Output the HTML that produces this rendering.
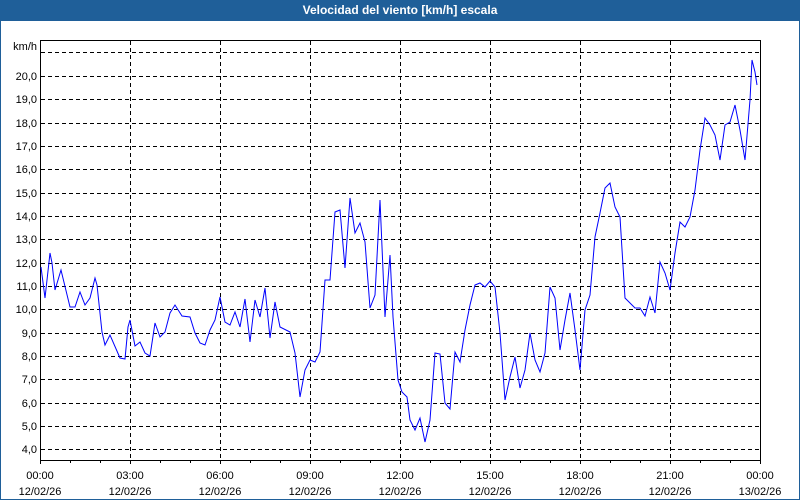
<!DOCTYPE html>
<html><head><style>
html,body{margin:0;padding:0;background:#fff;}
body{width:800px;height:500px;position:relative;overflow:hidden;font-family:"Liberation Sans",sans-serif;}
.frame{position:absolute;left:0;top:0;width:798px;height:498px;border:1px solid #1f5f99;}
.title{position:absolute;left:0;top:0;width:800px;height:21px;background:#1f5f99;color:#fff;font-weight:bold;font-size:12px;text-align:center;line-height:21px;}
</style></head><body>
<div class="frame"></div>
<div class="title">Velocidad del viento [km/h] escala</div>
<svg width="800" height="500" style="position:absolute;left:0;top:0" font-family="Liberation Sans, sans-serif" font-size="11">
<g stroke="#000" stroke-dasharray="4,3" stroke-width="1">
<line x1="41" x2="760" y1="52.5" y2="52.5"/><line x1="41" x2="760" y1="76.5" y2="76.5"/><line x1="41" x2="760" y1="99.5" y2="99.5"/><line x1="41" x2="760" y1="123.5" y2="123.5"/><line x1="41" x2="760" y1="146.5" y2="146.5"/><line x1="41" x2="760" y1="169.5" y2="169.5"/><line x1="41" x2="760" y1="193.5" y2="193.5"/><line x1="41" x2="760" y1="216.5" y2="216.5"/><line x1="41" x2="760" y1="239.5" y2="239.5"/><line x1="41" x2="760" y1="263.5" y2="263.5"/><line x1="41" x2="760" y1="286.5" y2="286.5"/><line x1="41" x2="760" y1="309.5" y2="309.5"/><line x1="41" x2="760" y1="333.5" y2="333.5"/><line x1="41" x2="760" y1="356.5" y2="356.5"/><line x1="41" x2="760" y1="379.5" y2="379.5"/><line x1="41" x2="760" y1="403.5" y2="403.5"/><line x1="41" x2="760" y1="426.5" y2="426.5"/><line x1="41" x2="760" y1="449.5" y2="449.5"/>
<line x1="130.5" x2="130.5" y1="41" y2="460"/><line x1="220.5" x2="220.5" y1="41" y2="460"/><line x1="310.5" x2="310.5" y1="41" y2="460"/><line x1="400.5" x2="400.5" y1="41" y2="460"/><line x1="490.5" x2="490.5" y1="41" y2="460"/><line x1="580.5" x2="580.5" y1="41" y2="460"/><line x1="670.5" x2="670.5" y1="41" y2="460"/>
</g>
<rect x="40.5" y="40.5" width="720" height="420" fill="none" stroke="#000"/>
<g stroke="#000"><line x1="40.5" x2="40.5" y1="460" y2="464"/><line x1="70.5" x2="70.5" y1="460" y2="463"/><line x1="100.5" x2="100.5" y1="460" y2="463"/><line x1="130.5" x2="130.5" y1="460" y2="464"/><line x1="160.5" x2="160.5" y1="460" y2="463"/><line x1="190.5" x2="190.5" y1="460" y2="463"/><line x1="220.5" x2="220.5" y1="460" y2="464"/><line x1="250.5" x2="250.5" y1="460" y2="463"/><line x1="280.5" x2="280.5" y1="460" y2="463"/><line x1="310.5" x2="310.5" y1="460" y2="464"/><line x1="340.5" x2="340.5" y1="460" y2="463"/><line x1="370.5" x2="370.5" y1="460" y2="463"/><line x1="400.5" x2="400.5" y1="460" y2="464"/><line x1="430.5" x2="430.5" y1="460" y2="463"/><line x1="460.5" x2="460.5" y1="460" y2="463"/><line x1="490.5" x2="490.5" y1="460" y2="464"/><line x1="520.5" x2="520.5" y1="460" y2="463"/><line x1="550.5" x2="550.5" y1="460" y2="463"/><line x1="580.5" x2="580.5" y1="460" y2="464"/><line x1="610.5" x2="610.5" y1="460" y2="463"/><line x1="640.5" x2="640.5" y1="460" y2="463"/><line x1="670.5" x2="670.5" y1="460" y2="464"/><line x1="700.5" x2="700.5" y1="460" y2="463"/><line x1="730.5" x2="730.5" y1="460" y2="463"/><line x1="760.5" x2="760.5" y1="460" y2="464"/></g>
<g text-anchor="end" fill="#000">
<text x="37" y="50">km/h</text>
<text x="37" y="80">20,0</text><text x="37" y="103">19,0</text><text x="37" y="127">18,0</text><text x="37" y="150">17,0</text><text x="37" y="173">16,0</text><text x="37" y="197">15,0</text><text x="37" y="220">14,0</text><text x="37" y="243">13,0</text><text x="37" y="267">12,0</text><text x="37" y="290">11,0</text><text x="37" y="313">10,0</text><text x="37" y="337">9,0</text><text x="37" y="360">8,0</text><text x="37" y="383">7,0</text><text x="37" y="407">6,0</text><text x="37" y="430">5,0</text><text x="37" y="453">4,0</text>
</g>
<g text-anchor="middle" fill="#000">
<text x="40" y="479">00:00</text><text x="40" y="495">12/02/26</text>
<text x="130" y="479">03:00</text><text x="130" y="495">12/02/26</text>
<text x="220" y="479">06:00</text><text x="220" y="495">12/02/26</text>
<text x="310" y="479">09:00</text><text x="310" y="495">12/02/26</text>
<text x="400" y="479">12:00</text><text x="400" y="495">12/02/26</text>
<text x="490" y="479">15:00</text><text x="490" y="495">12/02/26</text>
<text x="580" y="479">18:00</text><text x="580" y="495">12/02/26</text>
<text x="670" y="479">21:00</text><text x="670" y="495">12/02/26</text>
<text x="760" y="479">00:00</text><text x="760" y="495">13/02/26</text>
</g>
<polyline fill="none" stroke="#0000ff" stroke-width="1" points="41,267 45,298 50,253 52,263 55,290 61,270 70,307 75,307 80,292 85,305 90,298 95,278 97,285 102,332 105,345 110,335 120,358 125,359 128,327 130,320 135,346 140,342 145,353 150,356 155,323 160,337 165,332 170,313 175,305 182,316 190,317 195,333 200,343 205,345 210,330 215,320 220,297 225,322 230,325 235,312 240,327 245,299 250,342 255,300 260,317 265,288 270,338 275,302 280,327 290,332 295,353 300,397 305,370 310,360 315,362 320,352 325,280 330,280 335,212 340,210 345,268 350,198 355,233 360,223 365,242 370,308 375,295 380,200 385,317 390,255 393,317 398,380 402,392 407,397 410,420 415,430 420,418 425,442 430,420 435,353 440,354 445,403 450,409 455,352 460,362 465,330 470,305 475,285 480,283 485,287 490,281 495,287 500,333 505,400 510,377 515,357 520,388 525,370 530,333 535,360 540,372 545,353 550,287 555,298 560,350 565,320 570,293 575,330 580,370 585,310 590,295 595,237 600,213 605,188 610,183 615,207 620,217 625,298 635,308 640,308 645,316 650,297 655,313 660,262 665,273 670,290 675,253 680,222 685,227 690,217 695,190 700,150 705,118 710,125 715,135 720,160 725,125 730,122 735,105 740,130 745,160 750,100 752,60 755,72 757,85"/>
</svg>
</body></html>
